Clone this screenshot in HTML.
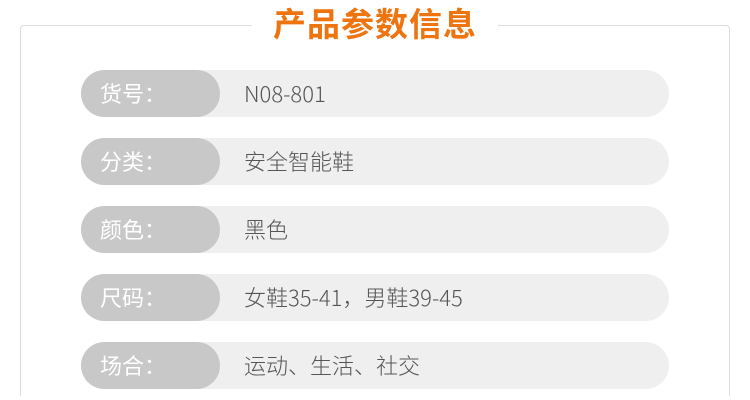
<!DOCTYPE html>
<html><head><meta charset="utf-8"><style>
html,body{margin:0;padding:0;background:#fff;width:750px;height:400px;overflow:hidden}
body{position:relative;font-family:"Liberation Sans","Noto Sans CJK SC",sans-serif}
.box{position:absolute;left:20px;top:25px;width:708px;height:370px;border:1px solid #dcdcdc;border-bottom:none;border-radius:4px 4px 0 0}
.title{position:absolute;left:252px;top:0;width:246px;height:50px;background:#fff;text-align:center;color:#ee7410;font-size:33px;line-height:50px;font-weight:bold;letter-spacing:1px}
.row{position:absolute;left:81px;width:588px;height:47px;border-radius:24px;background:#eeefee}
.lab{position:absolute;left:0;top:0;width:139px;height:47px;border-radius:24px;background:#c8c8c9;color:#fff;font-size:22px;line-height:47px;padding-left:19px;box-sizing:border-box;font-family:"Noto Sans CJK SC",sans-serif;font-weight:400}
.val{position:absolute;left:163px;top:0;line-height:47px;font-size:22px;color:#555;font-family:"Noto Sans CJK SC",sans-serif;font-weight:300}
</style></head><body>
<div class="box"></div>
<div class="title">产品参数信息</div>
<div class="row" style="top:70px"><div class="lab">货号：</div><div class="val">N08-801</div></div>
<div class="row" style="top:138px"><div class="lab">分类：</div><div class="val">安全智能鞋</div></div>
<div class="row" style="top:206px"><div class="lab">颜色：</div><div class="val">黑色</div></div>
<div class="row" style="top:274px"><div class="lab">尺码：</div><div class="val">女鞋35-41，男鞋39-45</div></div>
<div class="row" style="top:342px"><div class="lab">场合：</div><div class="val">运动、生活、社交</div></div>
</body></html>
